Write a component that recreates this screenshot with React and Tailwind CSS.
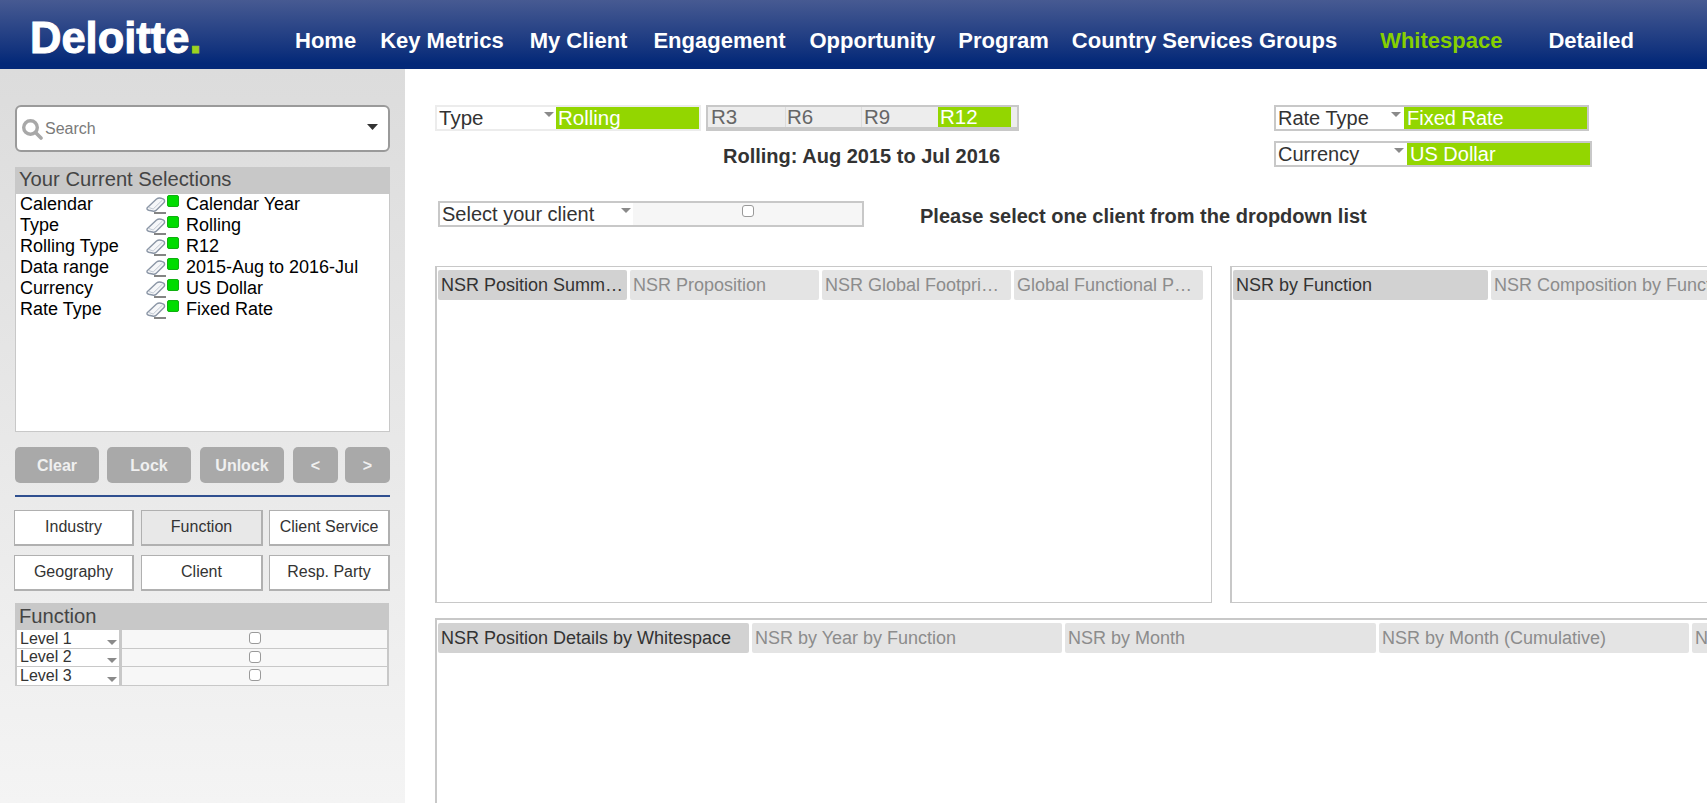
const arial = "font-['Liberation_Sans',Arial,sans-serif]";

const nav = [
  ["Home", "ml-[105px]", "text-white"],
  ["Key Metrics", "ml-[24px]", "text-white"],
  ["My Client", "ml-[26px]", "text-white"],
  ["Engagement", "ml-[26px]", "text-white"],
  ["Opportunity", "ml-[24px]", "text-white"],
  ["Program", "ml-[23px]", "text-white"],
  ["Country Services Groups", "ml-[23px]", "text-white"],
  ["Whitespace", "ml-[43px]", "text-[#86d000]"],
  ["Detailed", "ml-[46px]", "text-white"],
];

const selections = [
  ["Calendar", "Calendar Year"],
  ["Type", "Rolling"],
  ["Rolling Type", "R12"],
  ["Data range", "2015-Aug to 2016-Jul"],
  ["Currency", "US Dollar"],
  ["Rate Type", "Fixed Rate"],
];

function Eraser() {
  return (
    <svg width="21" height="17" viewBox="0 0 21 17" className="shrink-0">
      <path d="M1.2 10.8 L10.5 2 Q12.5 0.6 15 1.2 L17.5 2.2 Q19.3 3.4 18 5.6 L10 13.4 Q8.6 14.6 6.5 14 L2.8 13.2 Q0.4 12.6 1.2 10.8 Z" fill="#f6f7f9" stroke="#8a95a5" strokeWidth="1.4" />
      <path d="M2.5 10.4 L7.2 12 L16.5 3" fill="none" stroke="#c2c9d3" strokeWidth="1" />
      <path d="M8 16 H20" stroke="#333" strokeWidth="1.2" />
    </svg>
  );
}

function Arrow({ className = "" }) {
  return (
    <svg width="10" height="5" viewBox="0 0 10 5" className={"shrink-0 " + className}>
      <path d="M0 0 H10 L5 5 Z" fill="#8a8a8a" />
    </svg>
  );
}

function Check() {
  return <span className="block w-[12px] h-[12px] rounded-[3px] border border-[#9a9a9a] bg-white" />;
}

function ActionButton({ w, children }) {
  return (
    <div className={`${w} h-[36px] pt-[1px] rounded-[5px] bg-[#a9a9a9] flex items-center justify-center text-[#f0f0f0] font-bold text-[16px]`}>
      {children}
    </div>
  );
}

function FilterTab({ w, active, children }) {
  return (
    <div className={`${w} h-[36px] pb-[2px] border-2 border-[#b0b0b0] border-t-[1px] border-l-[1px] flex items-center justify-center text-[16px] text-[#333] ${active ? "bg-[#e8e8e8]" : "bg-white"}`}>
      {children}
    </div>
  );
}

function LevelRow({ label, h }) {
  return (
    <div className={`flex ${h} bg-[#c8c8c8] pb-[1px]`}>
      <div className="w-[102px] ml-[2px] bg-white flex items-center justify-between pr-[2px] pl-[3px] pb-[1px] text-[16px] leading-none text-[#333]">
        <span>{label}</span>
        <Arrow className="mt-[7px]" />
      </div>
      <div className="flex-1 ml-[3px] mr-[2px] bg-[#f7f7f7] flex items-start justify-center pt-[2px]">
        <Check />
      </div>
    </div>
  );
}

function Dropdown({ label, value, labelW, valueW }) {
  return (
    <div className="flex w-fit h-[26px] border-2 border-[#c8c8c8] bg-white">
      <div className={`${labelW} flex items-center justify-between pl-[2px] text-[20px] leading-none text-[#333]`}>
        <span>{label}</span>
        <Arrow className="mb-[7px]" />
      </div>
      <div className={`${valueW} ml-[3px] bg-[#93d600] text-white text-[20px] leading-none flex items-center pl-[3px]`}>
        {value}
      </div>
    </div>
  );
}

function Tab({ w, active, children }) {
  return (
    <div className={`${w} shrink-0 h-[30px] pb-[1px] rounded-[2px] flex items-center px-[3px] text-[18px] leading-none whitespace-nowrap ${active ? "bg-[#d2d2d2] text-[#333]" : "bg-[#e4e4e4] text-[#8c8c8c]"}`}>
      <span className="block w-full overflow-hidden text-ellipsis leading-[20px]">{children}</span>
    </div>
  );
}

export default function App() {
  return (
    <div className={`w-[1707px] h-[803px] overflow-hidden bg-white ${arial}`}>
      <header className="h-[69px] bg-gradient-to-b from-[#475a92] to-[#032878] to-[92%] flex">
        <div className="ml-[30px] mt-[14px] h-[48px] w-[160px] shrink-0 text-[43.5px] leading-[48px] font-bold text-white whitespace-nowrap [-webkit-text-stroke:1px_#ffffff]">
          Deloitte<span className="text-[#9dd320] [-webkit-text-stroke:1px_#9dd320]">.</span>
        </div>
        <nav className="flex pt-[28px] text-[22px] leading-[26px] font-bold whitespace-nowrap">
          {nav.map(([t, m, c]) => (
            <span key={t} className={`${m} ${c}`}>{t}</span>
          ))}
        </nav>
      </header>

      <div className="flex h-[734px]">
        <aside className="w-[405px] shrink-0 bg-gradient-to-b from-[#dcdcdc] to-[#f4f4f4] px-[15px] pt-[36px]">
          <div className="h-[47px] rounded-[6px] border-2 border-[#9a9a9a] bg-white flex items-center pl-[4px] pr-[10px]">
            <svg width="22" height="24" viewBox="0 0 22 24" className="shrink-0">
              <circle cx="9.5" cy="10.5" r="6.8" fill="none" stroke="#a8a8a8" strokeWidth="3.4" />
              <path d="M14.5 15.5 L20 21" stroke="#a8a8a8" strokeWidth="3.6" strokeLinecap="round" />
            </svg>
            <span className="ml-[2px] text-[16px] text-[#7a7a7a]">Search</span>
            <svg width="11" height="6" viewBox="0 0 11 6" className="ml-auto mb-[3px]">
              <path d="M0 0 H11 L5.5 6 Z" fill="#333" />
            </svg>
          </div>

          <div className="mt-[15px] h-[27px] bg-[#c8c8c8] pl-[4px] pb-[2px] text-[20.2px] leading-[25px] text-[#444]">Your Current Selections</div>
          <div className="h-[238px] bg-white border-x border-b border-[#c8c8c8] pl-[3px]">
            {selections.map(([k, v]) => (
              <div key={k} className="h-[21px] pb-[2px] flex items-center text-[18px] leading-none text-black">
                <span className="w-[127px] shrink-0 pl-[1px]">{k}</span>
                <div className="flex items-start w-[40px] shrink-0 pt-[3px]">
                  <Eraser />
                  <span className="block w-[12px] h-[12px] -mt-[2px] rounded-[2px] bg-[#00dc00] border border-[#10b010]" />
                </div>
                <span>{v}</span>
              </div>
            ))}
          </div>

          <div className="mt-[15px] flex">
            <ActionButton w="w-[84px]">Clear</ActionButton>
            <div className="w-[8px]" />
            <ActionButton w="w-[84px]">Lock</ActionButton>
            <div className="w-[9px]" />
            <ActionButton w="w-[84px]">Unlock</ActionButton>
            <div className="w-[9px]" />
            <ActionButton w="w-[45px]">&lt;</ActionButton>
            <div className="w-[7px]" />
            <ActionButton w="w-[45px]">&gt;</ActionButton>
          </div>

          <div className="mt-[12px] h-[2px] bg-[#2f4f8f]" />

          <div className="mt-[13px] -ml-[1px] flex flex-wrap gap-y-[9px]">
            <FilterTab w="w-[120px] mr-[7px]">Industry</FilterTab>
            <FilterTab w="w-[122px] mr-[6px]" active>Function</FilterTab>
            <FilterTab w="w-[121px]">Client Service</FilterTab>
            <FilterTab w="w-[120px] mr-[7px]">Geography</FilterTab>
            <FilterTab w="w-[122px] mr-[6px]">Client</FilterTab>
            <FilterTab w="w-[121px]">Resp. Party</FilterTab>
          </div>

          <div className="mt-[12px] w-[374px] h-[27px] bg-[#c8c8c8] pl-[4px] text-[20.2px] leading-[27px] text-[#444]">Function</div>
          <div className="w-[374px] pb-0">
            <LevelRow label="Level 1" h="h-[19px]" />
            <LevelRow label="Level 2" h="h-[18px]" />
            <LevelRow label="Level 3" h="h-[19px]" />
          </div>
        </aside>

        <main className="flex-1 min-w-0 pl-[30px] pt-[36px] overflow-hidden">
          <div className="flex h-[62px]">
            <div className="w-[584px] shrink-0">
              <div className="flex">
                <div className="flex h-[26px] border-2 border-[#ececec] bg-white mr-[5px]">
                  <div className="w-[117px] flex items-center justify-between pl-[2px] text-[20.5px] leading-none text-[#333]">
                    <span>Type</span>
                    <Arrow className="mb-[7px]" />
                  </div>
                  <div className="w-[143px] ml-[2px] bg-[#93d600] text-white text-[20.5px] leading-none flex items-center pl-[2px]">Rolling</div>
                </div>
                <div className="flex h-[26px] w-[313px] border-2 border-b-[4px] border-[#c8c8c8] bg-[#ededed] text-[20.5px] leading-none text-[#666]">
                  <div className="w-[78px] flex items-center pl-[3px] border-r border-[#dcdcdc]">R3</div>
                  <div className="w-[76px] flex items-center pl-[1px] border-r border-[#dcdcdc]">R6</div>
                  <div className="w-[76px] flex items-center pl-[2px]">R9</div>
                  <div className="w-[73px] flex items-center pl-[2px] bg-[#93d600] text-white">R12</div>
                </div>
              </div>
              <div className="mt-[15px] ml-[288px] text-[20px] leading-[21px] font-bold text-[#333] whitespace-nowrap">Rolling: Aug 2015 to Jul 2016</div>
            </div>
            <div className="ml-[255px] w-[330px] shrink-0 flex flex-col gap-[10px]">
              <Dropdown label="Rate Type" value="Fixed Rate" labelW="w-[125px]" valueW="w-[183px]" />
              <Dropdown label="Currency" value="US Dollar" labelW="w-[128px]" valueW="w-[183px]" />
            </div>
          </div>

          <div className="mt-[34px] flex items-center h-[26px]">
            <div className="ml-[3px] flex w-[426px] h-[26px] border-2 border-[#c8c8c8] bg-white">
              <div className="w-[191px] flex items-center justify-between pl-[2px] text-[20px] leading-none text-[#333]">
                <span>Select your client</span>
                <Arrow className="mb-[7px]" />
              </div>
              <div className="flex-1 ml-[2px] bg-[#f6f6f6] flex justify-center pt-[2px]">
                <Check />
              </div>
            </div>
            <div className="ml-[56px] mt-[4px] text-[20px] font-bold text-[#333] whitespace-nowrap">Please select one client from the dropdown list</div>
          </div>

          <div className="mt-[39px] flex h-[337px]">
            <div className="w-[777px] shrink-0 border border-l-2 border-[#c8c8c8] pl-[1px] pt-[3px]">
              <div className="flex gap-[3px]">
                <Tab w="w-[189px]" active>NSR Position Summ…</Tab>
                <Tab w="w-[189px]">NSR Proposition</Tab>
                <Tab w="w-[189px]">NSR Global Footpri…</Tab>
                <Tab w="w-[189px]">Global Functional P…</Tab>
              </div>
            </div>
            <div className="ml-[18px] flex-1 min-w-0 border-y border-l-2 border-[#c8c8c8] pl-[1px] pt-[3px] overflow-hidden">
              <div className="flex gap-[3px]">
                <Tab w="w-[255px]" active>NSR by Function</Tab>
                <Tab w="w-[255px]">NSR Composition by Function</Tab>
              </div>
            </div>
          </div>

          <div className="mt-[15px] h-[200px] border-t-2 border-l-2 border-[#c8c8c8] pl-[1px] pt-[3px] overflow-hidden">
            <div className="flex gap-[3px]">
              <Tab w="w-[311px]" active>NSR Position Details by Whitespace</Tab>
              <Tab w="w-[310px]">NSR by Year by Function</Tab>
              <Tab w="w-[311px]">NSR by Month</Tab>
              <Tab w="w-[310px]">NSR by Month (Cumulative)</Tab>
              <Tab w="w-[311px]">NSR by Client</Tab>
            </div>
          </div>
        </main>
      </div>
    </div>
  );
}
